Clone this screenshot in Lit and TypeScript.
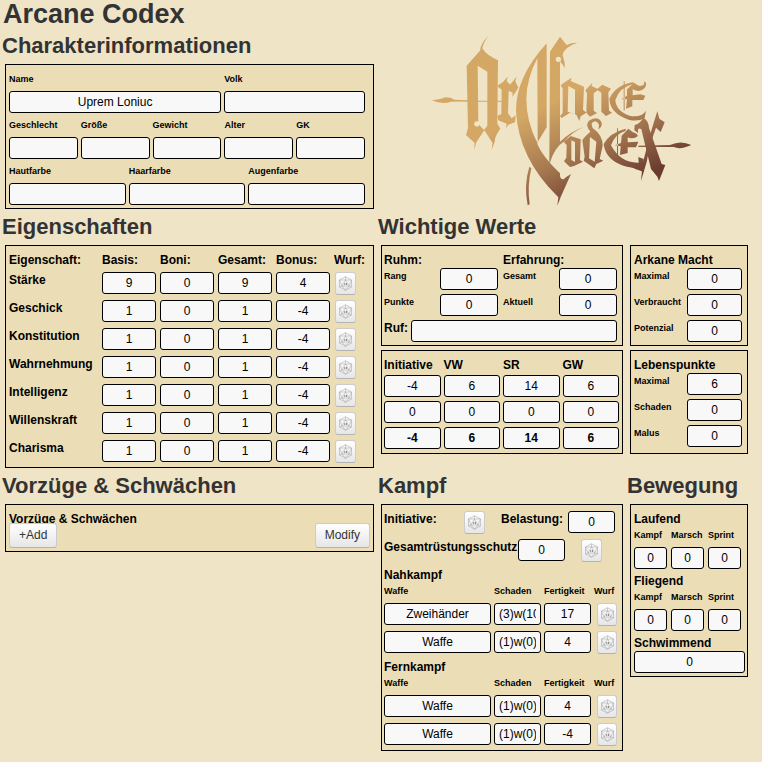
import { LitElement, html, css, svg } from "lit";
import { customElement } from "lit/decorators.js";
import { classMap } from "lit/directives/class-map.js";

const attributes = [
  { name: "Stärke", values: ["9", "0", "9", "4"] },
  { name: "Geschick", values: ["1", "0", "1", "-4"] },
  { name: "Konstitution", values: ["1", "0", "1", "-4"] },
  { name: "Wahrnehmung", values: ["1", "0", "1", "-4"] },
  { name: "Intelligenz", values: ["1", "0", "1", "-4"] },
  { name: "Willenskraft", values: ["1", "0", "1", "-4"] },
  { name: "Charisma", values: ["1", "0", "1", "-4"] },
];
const attributeColumns = ["Basis", "Boni", "Gesamt", "Bonus"];

const combatColumns = ["Initiative", "VW", "SR", "GW"];
const combatRows = [
  { name: "Basis", values: ["-4", "6", "14", "6"], total: false },
  { name: "Boni", values: ["0", "0", "0", "0"], total: false },
  { name: "Gesamt", values: ["-4", "6", "14", "6"], total: true },
];

type Pair = [label: string, value: string];
const arcane: Pair[] = [["Maximal", "0"], ["Verbraucht", "0"], ["Potenzial", "0"]];
const life: Pair[] = [["Maximal", "6"], ["Schaden", "0"], ["Malus", "0"]];

const melee = [["Zweihänder", "(3)w(10)", "17"], ["Waffe", "(1)w(0)", "4"]];
const ranged = [["Waffe", "(1)w(0)", "4"], ["Waffe", "(1)w(0)", "-4"]];

const die = html`<svg class="die" viewBox="0 0 30 30" aria-hidden="true">
  ${svg`
    <path d="M15 1.5 27 8v14l-12 6.500L3 22V8Z" />
    <path d="M15 8 22 20H8Z" />
    <path d="M15 1.500V8M3 8l12 0 12 0M3 8l5 12M27 8l-5 12M3 22l5-2M27 22l-5-2M8 20l7 8.500 7-8.500" />
    <path class="pips" d="M12.500 14h2v4h-2zM16 14h2v4h-2z" />
  `}
</svg>`;

const roll = (what: string) =>
  html`<button class="roll" type="button" aria-label=${`Wurf ${what}`}>${die}</button>`;

const field = (id: string, label: string, value = "") => html`
  <div class="field">
    <label class="small" for=${id}>${label}</label>
    <input id=${id} type="text" .value=${value} />
  </div>
`;

const line = (id: string, label: string, value: string) => html`
  <label class="small" for=${id}>${label}</label>
  <input id=${id} type="text" .value=${value} />
`;

@customElement("app-root")
export class AppRoot extends LitElement {
  static styles = css`
    :host {
      display: block;
      min-height: 100vh;
      background: #efe4c6;
      color: #000;
      font-family: "Liberation Sans", Arial, sans-serif;
      font-size: 12px;
      line-height: 20px;
    }
    * { box-sizing: border-box; }
    h1, h2, h3 { margin: 0; font-weight: bold; }
    h1 {
      margin-left: -2px;
      font-size: 27px;
      line-height: 28px;
      color: #333;
    }
    h2 {
      margin-left: -3px;
      font-size: 22px;
      line-height: 36px;
      color: #333;
      white-space: nowrap;
    }
    h3 { height: 18px; font-size: 12px; line-height: 20px; }
    .page {
      display: grid;
      grid-template-columns: minmax(0, 369fr) minmax(0, 242fr) minmax(0, 118fr);
      column-gap: 7px;
      align-items: start;
      padding: 0 14px 11px 5px;
    }
    .wide { grid-column: span 2; }
    .brand {
      align-self: end;
      display: flex;
      justify-content: center;
      padding: 0 4px 2px 0;
    }
    .logo { width: 275px; max-width: 100%; height: auto; }
    .panel {
      border: 1px solid #000;
      background: #ebdeb6;
      padding: 4px 5px 3px 3px;
    }
    .panel.tabular { padding: 4px 0 1px 3px; }
    .panel.info {
      display: grid;
      padding: 2px 8px 3px 3px;
    }
    .row { display: grid; column-gap: 3px; }
    .names { grid-template-columns: 211fr 140fr; }
    .five { grid-template-columns: repeat(5, minmax(0, 1fr)); }
    .three { grid-template-columns: repeat(3, minmax(0, 1fr)); }
    .small { font-size: 9px; line-height: 16px; font-weight: bold; white-space: nowrap; }
    .field { min-width: 0; }
    .info .small { display: block; line-height: 24px; }
    label { display: block; font-weight: bold; white-space: nowrap; }
    input {
      display: block;
      width: 100%;
      min-width: 0;
      height: 22px;
      margin: 0;
      padding: 0 4px;
      border: 1px solid #000;
      border-radius: 3px;
      background: #f8f8f8;
      color: #000;
      font: inherit;
      font-size: 12px;
      font-weight: normal;
      text-align: center;
    }
    input.total { font-weight: bold; }
    button {
      margin: 0;
      border: 1px solid #ccc;
      border-bottom-color: #b3b3b3;
      border-radius: 3px;
      background: linear-gradient(#fff, #e6e6e6);
      color: #333;
      font: inherit;
    }
    .roll {
      display: flex;
      align-items: center;
      justify-content: center;
      width: 21px;
      height: 23px;
      padding: 0;
    }
    .die {
      width: 15px;
      height: 15px;
      fill: none;
      stroke: #a0a0a4;
      stroke-width: 1;
    }
    .pips { fill: #8c8c90; stroke: none; }

    table { width: 100%; border-collapse: collapse; table-layout: fixed; }
    th, td { padding: 0; text-align: left; vertical-align: top; white-space: nowrap; }
    th { font-weight: bold; }
    thead th { height: 20px; }
    tbody tr { height: 28px; }
    tbody td { padding: 2px 4px 0 0; }
    .stat-col { width: 58px; }
    .wurf-col { width: 39px; }
    .stats .roll { margin-left: 1px; }

    .traits { padding: 0 3px 3px 3px; }
    .traits h3 { line-height: 28px; }
    .actions { display: flex; justify-content: space-between; }
    .actions button { height: 25px; padding: 0 9px; line-height: 23px; }

    .values {
      display: grid;
      grid-template-columns: minmax(0, 242fr) minmax(0, 118fr);
      gap: 4px 7px;
    }
    .fame { padding-left: 2px; }
    .halves { display: grid; grid-template-columns: 1fr 1fr; column-gap: 5px; }
    .lines { display: grid; grid-template-columns: minmax(0, 1fr) 58px; row-gap: 4px; }
    .lines.narrow { grid-template-columns: minmax(0, 1fr) 55px; }
    .repute {
      display: grid;
      grid-template-columns: 27px minmax(0, 1fr);
      margin-top: 4px;
      line-height: 16px;
    }
    .defence { padding: 4px 0 0 2px; }
    .defence thead th { height: 18px; }
    .defence tbody tr { height: 26px; }
    .defence tbody td { padding: 0 3px 0 0; }

    .fight { padding: 4px 3px 1px 2px; }
    .fight-row { display: flex; height: 28px; }
    .fight-row .roll, .fight-row input { margin-top: 2px; }
    .fight-row input { flex: none; width: 47px; }
    .init-label { width: 80px; }
    .load-label { width: 67px; margin-left: 16px; }
    .armour-label { width: 134px; }
    .armour-roll { margin-left: 16px; }
    .fight h3 { height: 20px; }
    .weapons thead th { height: 16px; font-size: 9px; line-height: 12px; }
    .weapons tbody td { padding-right: 3px; }
    .damage-col { width: 50px; }
    .skill-col { width: 50px; }
    .throw-col { width: 25px; }
    .weapons .roll { width: 20px; margin-left: 3px; }

    .moves { padding-right: 2px; }
    .move { column-gap: 4px; margin-right: 4px; padding-bottom: 2px; }
    .move .small { height: 20px; }
  `;

  private weapons(caption: string, key: string, rows: string[][]) {
    return html`
      <h3 id=${key}>${caption}</h3>
      <table class="weapons" aria-labelledby=${key}>
        <colgroup>
          <col /><col class="damage-col" /><col class="skill-col" /><col class="throw-col" />
        </colgroup>
        <thead>
          <tr>
            ${["Waffe", "Schaden", "Fertigkeit", "Wurf"].map((c) => html`<th scope="col">${c}</th>`)}
          </tr>
        </thead>
        <tbody>
          ${rows.map(
            ([weapon, damage, skill]) => html`<tr>
              <td><input type="text" aria-label="Waffe" .value=${weapon} /></td>
              <td><input type="text" aria-label="Schaden" .value=${damage} /></td>
              <td><input type="text" aria-label="Fertigkeit" .value=${skill} /></td>
              <td>${roll(weapon)}</td>
            </tr>`,
          )}
        </tbody>
      </table>
    `;
  }

  private movement(caption: string, key: string) {
    return html`
      <h3>${caption}</h3>
      <div class="row three move">
        ${["Kampf", "Marsch", "Sprint"].map((m) => field(`${key}-${m}`, m, "0"))}
      </div>
    `;
  }

  private logo() {
    return html`<svg class="logo" viewBox="0 30 825 516" role="img" aria-label="Arcane Codex">
      ${svg`
        <defs>
          <linearGradient id="bronze" gradientUnits="userSpaceOnUse" x1="171" y1="338" x2="318" y2="629">
            <stop offset="0" stop-color="#d4a765" />
            <stop offset=".5" stop-color="#a87b51" />
            <stop offset="1" stop-color="#6b3a30" />
          </linearGradient>
        </defs>
        <g fill="url(#bronze)" fill-rule="evenodd">
          <path d="M190 32Q173 58 172 70Q184 90 219 106L217 296L226 311Q208 336 209 350L200 375L203 354L178 316L154 352L147 375L149 354L123 330L129 309L125 122L166 76Q164 60 190 32ZM158 122L160 290A8 8 0 1 0 163 300L177 315L187 302V140Z" />
          <path d="M20 226Q45 224 61 217Q78 217 88 224L130 226V229L78 230Q54 239 20 226ZM130 227H232V230H130Z" />
          <path d="M217 182L234 171L248 155L245 168L255 179L275 155L271 169L280 188L262 216L263 203L251 197L249 265L260 280L272 271L270 292L250 299L243 309L245 296L220 286L217 273L229 267L230 194L221 187Z" />
          <path d="M365 55Q272 157 273 258Q280 400 400 517L397 542L408 514L438 447Q422 456 416 463Q403 463 405 445Q350 392 336 354L365 307ZM337 100L338 356Q304 290 304 222Q305 160 337 100Z" />
          <path d="M313 425Q296 480 308 541L314 538Q306 484 319 430Z" />
          <path d="M375 80L405 35L425 60Q440 52 457 53Q415 67 413 91Q420 110 420 129L406 110Q407 111 405 109V350Q440 318 476 306Q440 322 418 349Q388 367 373 418ZM400 95A8 8 0 1 0 400 111A8 8 0 1 0 400 95Z" />
          <path d="M407 181L419 172L440 158L437 168L477 185L474 254L484 263L467 274L463 288L454 269L435 263L410 279L405 274L413 263V191ZM430 183L428 260L437 263L450 268V194Z" />
          <path d="M481 196L502 173L500 183L517 191L532 179L558 191L550 202L552 257L561 263L543 273L529 260V203L518 196L506 205V257L516 264L495 275L484 263L486 205Z" />
          <path d="M625 171Q571 180 553 222Q556 266 611 284Q640 291 659 279L663 257Q650 278 616 273Q573 259 571 225Q583 187 625 177Z" />
          <path d="M596 168H599V256H596ZM590 222L606 212V193L627 173L641 182Q661 185 657 169Q669 174 659 189Q646 204 623 193V211L646 208L661 212L655 225H622V244L603 251L606 223Z" />
          <path d="M416 350L437 333L467 343L465 405L474 410L447 423L435 426L417 409L424 398L425 360ZM439 346V405L450 411V351Z" />
          <path d="M482 333L496 320Q477 297 495 285Q520 272 530 293Q532 305 520 313Q527 294 511 289Q494 291 503 309Q533 330 533 362L524 402L535 407L514 417L508 430L476 407L479 395L472 345ZM495 336L492 400L509 410L514 350Z" />
          <path d="M602 311Q554 323 536 357Q542 409 606 425Q624 427 631 432L657 441L656 402L640 396L641 413Q587 415 558 361Q568 328 602 317Z" />
          <path d="M576 310H579V402H576ZM570 361L588 354L590 332L610 311L624 322Q635 324 639 333Q625 344 608 337V352L640 350L633 367H608V384L585 390L587 364Z" />
          <path d="M629 300Q643 297 653 281L655 278Q671 287 672 309L710 417L721 420L702 468L697 455L678 432L649 313Q637 305 639 324L628 316Z" />
          <path d="M697 258L703 281L719 292L707 321L693 308Q675 355 665 411L648 468L653 416Q672 333 697 258Z" />
          <path d="M640 362L735 360Q767 345 799 360Q767 375 746 366L640 366Z" />
        </g>
      `}
    </svg>`;
  }

  render() {
    return html`
      <main class="page">
        <section>
          <h1>Arcane Codex</h1>
          <h2>Charakterinformationen</h2>
          <div class="panel info">
            <div class="row names">
              ${field("name", "Name", "Uprem Loniuc")} ${field("volk", "Volk")}
            </div>
            <div class="row five">
              ${["Geschlecht", "Größe", "Gewicht", "Alter", "GK"].map((l) => field(l, l))}
            </div>
            <div class="row three">
              ${["Hautfarbe", "Haarfarbe", "Augenfarbe"].map((l) => field(l, l))}
            </div>
          </div>
        </section>
        <div class="wide brand">${this.logo()}</div>

        <section>
          <h2>Eigenschaften</h2>
          <div class="panel tabular">
            <table class="stats">
              <colgroup>
                <col />${attributeColumns.map(() => html`<col class="stat-col" />`)}<col class="wurf-col" />
              </colgroup>
              <thead>
                <tr>
                  <th scope="col">Eigenschaft:</th>
                  ${attributeColumns.map((c) => html`<th scope="col">${c}:</th>`)}
                  <th scope="col">Wurf:</th>
                </tr>
              </thead>
              <tbody>
                ${attributes.map(
                  (a) => html`<tr>
                    <th scope="row">${a.name}</th>
                    ${a.values.map(
                      (v, i) => html`<td>
                        <input type="text" aria-label=${`${a.name} ${attributeColumns[i]}`} .value=${v} />
                      </td>`,
                    )}
                    <td>${roll(a.name)}</td>
                  </tr>`,
                )}
              </tbody>
            </table>
          </div>
        </section>

        <section class="wide">
          <h2>Wichtige Werte</h2>
          <div class="values">
            <div class="panel fame">
              <div class="halves">
                <div>
                  <h3>Ruhm:</h3>
                  <div class="lines">${line("rang", "Rang", "0")} ${line("punkte", "Punkte", "0")}</div>
                </div>
                <div>
                  <h3>Erfahrung:</h3>
                  <div class="lines">${line("gesamt", "Gesamt", "0")} ${line("aktuell", "Aktuell", "0")}</div>
                </div>
              </div>
              <div class="repute">
                <label for="ruf">Ruf:</label>
                <input id="ruf" type="text" />
              </div>
            </div>
            <div class="panel">
              <h3>Arkane Macht</h3>
              <div class="lines narrow">${arcane.map(([l, v]) => line(`macht-${l}`, l, v))}</div>
            </div>
            <div class="panel defence">
              <table>
                <thead>
                  <tr>${combatColumns.map((c) => html`<th scope="col">${c}</th>`)}</tr>
                </thead>
                <tbody>
                  ${combatRows.map(
                    (r) => html`<tr>
                      ${r.values.map(
                        (v, i) => html`<td>
                          <input
                            class=${classMap({ total: r.total })}
                            type="text"
                            aria-label=${`${combatColumns[i]} ${r.name}`}
                            .value=${v}
                          />
                        </td>`,
                      )}
                    </tr>`,
                  )}
                </tbody>
              </table>
            </div>
            <div class="panel">
              <h3>Lebenspunkte</h3>
              <div class="lines narrow">${life.map(([l, v]) => line(`leben-${l}`, l, v))}</div>
            </div>
          </div>
        </section>

        <section>
          <h2>Vorzüge &amp; Schwächen</h2>
          <div class="panel traits">
            <h3>Vorzüge &amp; Schwächen</h3>
            <div class="actions">
              <button type="button">+Add</button>
              <button type="button">Modify</button>
            </div>
          </div>
        </section>

        <section>
          <h2>Kampf</h2>
          <div class="panel fight">
            <div class="fight-row">
              <span class="init-label"><b>Initiative:</b></span>
              ${roll("Initiative")}
              <label class="load-label" for="belastung">Belastung:</label>
              <input id="belastung" type="text" value="0" />
            </div>
            <div class="fight-row">
              <label class="armour-label" for="schutz">Gesamtrüstungsschutz:</label>
              <input id="schutz" type="text" value="0" />
              <span class="armour-roll">${roll("Gesamtrüstungsschutz")}</span>
            </div>
            ${this.weapons("Nahkampf", "nahkampf", melee)}
            ${this.weapons("Fernkampf", "fernkampf", ranged)}
          </div>
        </section>

        <section>
          <h2>Bewegung</h2>
          <div class="panel moves">
            ${this.movement("Laufend", "laufend")} ${this.movement("Fliegend", "fliegend")}
            <h3><label for="schwimmend">Schwimmend</label></h3>
            <input id="schwimmend" type="text" value="0" />
          </div>
        </section>
      </main>
    `;
  }
}
